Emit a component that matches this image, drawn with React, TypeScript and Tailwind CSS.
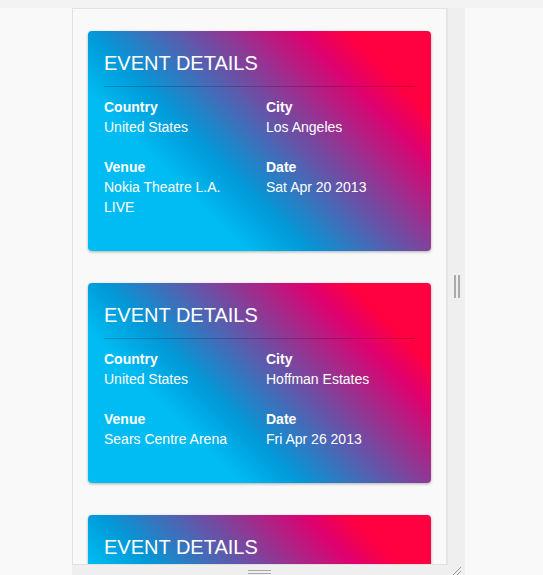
import React from 'react'

interface EventInfo {
  country: string
  city: string
  venue: string
  date: string
}

const events: EventInfo[] = [
  { country: 'United States', city: 'Los Angeles', venue: 'Nokia Theatre L.A. LIVE', date: 'Sat Apr 20 2013' },
  { country: 'United States', city: 'Hoffman Estates', venue: 'Sears Centre Arena', date: 'Fri Apr 26 2013' },
  { country: 'United States', city: 'Chicago', venue: 'United Center', date: 'Sat Apr 27 2013' },
]

function Field({ label, value }: { label: string; value: string }) {
  return (
    <div className="mb-5">
      <p className="font-bold">{label}</p>
      <p>{value}</p>
    </div>
  )
}

function EventCard({ event }: { event: EventInfo }) {
  return (
    <div className="w-[343px] shrink-0 rounded bg-[linear-gradient(45deg,#00bcf2_0%,#00bcf2_28%,#009ad8_39%,#e0006e_77%,#ff0040_85%,#ff0040_100%)] px-4 pt-4 pb-[14px] text-white shadow-[0_1px_3px_rgba(0,0,0,0.3)]">
      <h2 className="text-[20px] leading-8 font-normal">EVENT DETAILS</h2>
      <div className="mt-[7px] h-px bg-black/20" />
      <div className="mt-[10px] grid grid-cols-2 gap-x-[13px] text-[14px] leading-5">
        <Field label="Country" value={event.country} />
        <Field label="City" value={event.city} />
        <Field label="Venue" value={event.venue} />
        <Field label="Date" value={event.date} />
      </div>
    </div>
  )
}

export default function App() {
  return (
    <div className="h-[575px] overflow-hidden bg-[#f9f9f9] font-['Liberation_Sans',Arial,sans-serif]">
      <div className="h-2 bg-[#f3f3f3]" />
      <div className="ml-[72px] flex w-[393px]">
        {/* Preview frame */}
        <div className="flex h-[557px] w-[375px] flex-col items-center gap-8 overflow-hidden border border-[#e2e2e2] bg-[#f9f9f9] pt-[22px]">
          {events.map((ev, i) => (
            <EventCard key={i} event={ev} />
          ))}
        </div>
        {/* Side resize handle */}
        <div className="flex w-[18px] items-center justify-center gap-[2px] border-l border-[#e6e6e6] bg-[#efefef]">
          <span className="h-[23px] w-[2px] bg-[#aaaaaa]" />
          <span className="h-[23px] w-[2px] bg-[#aaaaaa]" />
        </div>
      </div>
      {/* Bottom resize handle */}
      <div className="relative ml-[72px] h-[12px] w-[393px] bg-[#efefef]">
        <div className="absolute left-[176px] top-[5px] flex w-[23px] flex-col gap-[2px]">
          <span className="h-px bg-[#aaaaaa]" />
          <span className="h-px bg-[#aaaaaa]" />
        </div>
        <svg className="absolute right-[3px] top-[1px]" width="12" height="10" viewBox="0 0 12 10">
          <path d="M2 10 L11 1 M6 10 L11 5" stroke="#999" strokeWidth="1" fill="none" />
        </svg>
      </div>
    </div>
  )
}
